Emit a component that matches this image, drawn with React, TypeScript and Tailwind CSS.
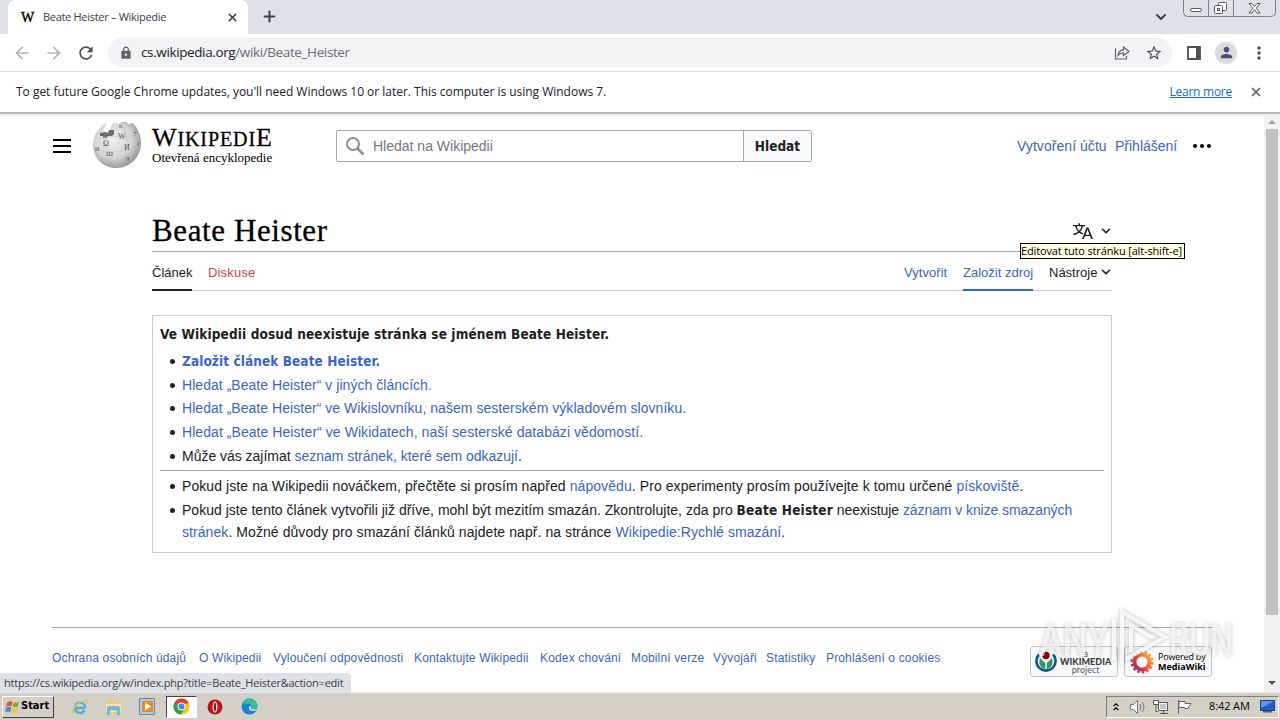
import type { ReactNode } from 'react';
import { ChevronDown, X, Plus } from 'lucide-react';
import { MdArrowBack, MdArrowForward, MdRefresh, MdLock, MdStarBorder, MdPerson, MdMoreVert } from 'react-icons/md';

const UI_FONT = "font-['Open_Sans','Noto_Sans',sans-serif]";
const PAGE_FONT = "font-['Liberation_Sans',Arial,sans-serif]";
const BOLD_FONT = "font-['DejaVu_Sans_Condensed','DejaVu_Sans',sans-serif] [font-stretch:condensed] font-bold text-[13.5px]";

const FOOTER_LINKS = [
  { label: 'Ochrana osobních údajů', width: 'w-[135px]' },
  { label: 'O Wikipedii', width: 'w-[62px]' },
  { label: 'Vyloučení odpovědnosti', width: 'w-[129px]' },
  { label: 'Kontaktujte Wikipedii', width: 'w-[114px]' },
  { label: 'Kodex chování', width: 'w-[79px]' },
  { label: 'Mobilní verze', width: 'w-[70px]' },
  { label: 'Vývojáři', width: 'w-[41px]' },
  { label: 'Statistiky', width: 'w-[48px]' },
  { label: 'Prohlášení o cookies', width: 'w-[116px]' },
];

function Link({ children, className = '' }: { children: ReactNode; className?: string }) {
  return <a className={`text-[#3a66c4] ${className}`}>{children}</a>;
}

function Item({ children, className = '' }: { children: ReactNode; className?: string }) {
  return (
    <li className={`flex ${className}`}>
      <span className="mt-[9px] mr-[7px] ml-[10px] size-[5px] shrink-0 rounded-full bg-[#202122]" />
      <span className="whitespace-nowrap">{children}</span>
    </li>
  );
}

function TabStrip() {
  return (
    <div className="flex h-[34px] bg-[#dee1e6]">
      <div className="ml-2 flex w-60 items-center rounded-t-lg bg-white pl-3">
        <span className="w-[31px] pl-px font-['Liberation_Serif',serif] text-[14px] tracking-tight text-black [-webkit-text-stroke:0.4px_black]">W</span>
        <span className="-ml-2 flex-1 text-[11px] tracking-[-0.3px] whitespace-nowrap text-[#3c4043]">Beate Heister – Wikipedie</span>
        <X className="mr-[9px] size-[13px] text-[#3c4043]" strokeWidth={3} />
      </div>
      <Plus className="mt-2 ml-[13px] size-[17px] text-[#3c4043]" strokeWidth={2.8} />
      <div className="flex-1" />
      <ChevronDown className="mt-[9px] mr-[14px] size-4 text-[#3c4043]" strokeWidth={2.8} />
      <svg className="mr-[3px] h-[17px] w-[94px]" viewBox="0 0 94 17" fill="none" stroke="#7c8087">
        <path d="M.5 0v12.500q0 4 4 4h84q4 0 4-4V0M25.500 0v16M50.500 0v16" />
        <rect x="7.500" y="8.500" width="11" height="3" rx="1.500" fill="#fff" stroke="#555a62" />
        <g stroke="#555a62" fill="#fff">
          <rect x="35.500" y="2.500" width="8" height="8" rx="1" />
          <rect x="31.500" y="5.500" width="8" height="8" rx="1" />
          <rect x="34.500" y="8.500" width="2" height="2" />
          <path d="M66 3.500h3l2.500 3 2.500-3h3l-3.700 4.500 3.700 5h-3l-2.500-3.300L69 13h-3l3.800-5z" />
        </g>
      </svg>
    </div>
  );
}

function Toolbar() {
  return (
    <div className="flex h-[37px] items-center bg-white text-[#5f6368]">
      <MdArrowBack className="ml-3 size-5 text-[#b4b6b9]" />
      <MdArrowForward className="ml-3 size-5 text-[#b4b6b9]" />
      <MdRefresh className="ml-3 size-5 text-[#4d5156]" />
      <div className="ml-3 flex h-[29px] w-[1064px] items-center rounded-full bg-[#f1f3f4] pr-[9px] pl-[11px]">
        <MdLock className="size-[14px]" />
        <span className="ml-2 flex-1 text-[13.500px] tracking-[-0.38px] text-[#6a6e73]">
          <span className="text-[#202124]">cs.wikipedia.org</span>/wiki/Beate_Heister
        </span>
        <svg className="mr-[15px] size-[17px]" viewBox="0 0 17 17" fill="none" stroke="currentColor" strokeWidth="1.200">
          <path d="M2.500 4.500v10.500h11v-3M5 11.500c.3-4 2.500-5.500 5.500-5.700V3l5.500 4.500-5.500 4V8.800c-2.500 0-4 .7-5.500 2.700z" />
        </svg>
        <MdStarBorder className="size-[18px] text-[#4d5156]" />
      </div>
      <svg className="ml-[15px] size-[14px]" viewBox="0 0 14 14">
        <path d="M1 1h12v12H1z" fill="none" stroke="#4d5156" strokeWidth="1.800" />
        <path d="M9 1h4v12H9z" fill="#4d5156" />
      </svg>
      <span className="ml-[14px] flex size-[22px] items-center justify-center rounded-full bg-[#dadce0]">
        <MdPerson className="size-[17px] text-[#465175]" />
      </span>
      <MdMoreVert className="ml-[12px] size-5 text-[#4d5156]" />
    </div>
  );
}

function Globe() {
  return (
    <svg className="h-[49px] w-[50px]" viewBox="0 0 50 49">
      <defs>
        <radialGradient id="globe" cx=".42" cy=".4" r=".65">
          <stop offset="0" stopColor="#efefef" />
          <stop offset=".6" stopColor="#d4d4d4" />
          <stop offset="1" stopColor="#8b8b8b" />
        </radialGradient>
      </defs>
      <path d="M7 8q4-5 8-6l-4 8 5 1 5-9q4-1 5 1l4-2q5-1 6 2l5-1q8 9 8 20C49 36 38 47 24.500 47S1 37 1 24Q1 14 7 8z" fill="url(#globe)" />
      <path d="m8 12 6-1 2 1 1-3h5v4l-2 2h-4l-1 2h-4v-2H8z" fill="#6d6d6d" />
      <path d="M14 16q-2 9 2 16t8 14M29 1q7 12 6 25t-9 21M3 18q20-5 44-1M1 28q22 6 47-2M6 38q18 5 36-1" fill="none" stroke="#bcbcbc" strokeWidth=".5" />
      <g fill="#555" fontFamily="Liberation Serif" fontSize="8">
        <text x="11" y="25">Ω</text>
        <text x="26" y="18">W</text>
        <text x="32" y="29">И</text>
        <text x="14" y="35" fontSize="7">Ш</text>
        <text x="41" y="15" fontSize="7">7</text>
        <text x="3" y="30" fontSize="6">И</text>
        <text x="34" y="40" fontSize="7">9</text>
        <text x="45" y="25" fontSize="7">i</text>
        <text x="27" y="7" fontSize="6">n</text>
      </g>
    </svg>
  );
}

function SiteHeader() {
  return (
    <header className="flex h-[66px] items-center pl-[53px]">
      <div className="flex w-[18px] flex-col gap-[4px]">
        <span className="h-[2px] bg-black" />
        <span className="h-[2px] bg-black" />
        <span className="h-[2px] bg-black" />
      </div>
      <div className="-mt-px ml-[21px]"><Globe /></div>
      <div className="ml-[10px] w-[184px] font-['Liberation_Serif',serif] whitespace-nowrap text-black">
        <div className="text-[20px] leading-[22px] tracking-[0.9px] [-webkit-text-stroke:0.3px_black]">
          <span className="text-[26px]">W</span>IKIPEDI<span className="text-[26px]">E</span>
        </div>
        <div className="text-[13px] leading-[15px]">Otevřená encyklopedie</div>
      </div>
      <div className="flex h-8 w-[476px] rounded-[2px] border border-[#a2a9b1]">
        <div className="flex flex-1 items-center">
          <svg className="ml-2 size-5" viewBox="0 0 20 20" fill="none" stroke="#8b8f94" strokeWidth="2">
            <circle cx="8" cy="8" r="6" />
            <path d="m12.500 12.500 6 6" strokeWidth="2.500" />
          </svg>
          <span className="ml-2 text-[14px] text-[#72777d]">Hledat na Wikipedii</span>
        </div>
        <div className={`flex w-[68px] items-center justify-center border-l border-[#a2a9b1] bg-[#f8f9fa] text-[#202122] ${BOLD_FONT}`}>Hledat</div>
      </div>
      <div className="ml-[205px] flex text-[14px] whitespace-nowrap">
        <Link className="w-[98px] tracking-[0.05px]">Vytvoření účtu</Link>
        <Link className="w-[78px]">Přihlášení</Link>
      </div>
      <div className="flex gap-[3px]">
        <span className="size-1 rounded-full bg-black" />
        <span className="size-1 rounded-full bg-black" />
        <span className="size-1 rounded-full bg-black" />
      </div>
    </header>
  );
}

function Tooltip() {
  return (
    <div className="absolute top-[243px] left-[1020px] flex h-4 w-[165px] items-center border border-black bg-[#ffffe1] text-[11px] tracking-[-0.15px] whitespace-nowrap text-black">
      Editovat tuto stránku [alt-shift-e]
    </div>
  );
}

function Article() {
  return (
    <main className="ml-[152px] w-[960px] text-[#202122]">
      <div className="flex h-[42px] items-center border-b border-[#a2a9b1]">
        <h1 className="flex-1 font-['Liberation_Serif',serif] text-[31px] leading-10 tracking-[0.6px] text-black [-webkit-text-stroke:0.3px_black]">Beate Heister</h1>
        <svg className="size-5" viewBox="0 0 20 20" fill="#202122">
          <path d="M20 18h-1.440a.6.6 0 0 1-.4-.12.800.800 0 0 1-.23-.31L17 15h-5l-1 2.540a.8.8 0 0 1-.22.300.6.6 0 0 1-.4.140H9l4.550-11.470h1.890zm-3.530-4.310L14.890 9.500a12 12 0 0 1-.39-1.240q-.09.370-.19.690l-.19.560-1.580 4.190zm-6.300-1.580a13.400 13.400 0 0 1-2.910-1.410 11.500 11.500 0 0 0 2.810-5.370H12V4H7.310a4 4 0 0 0-.2-.560C6.870 2.790 6.600 2 6.600 2l-1.470.5s.4.890.600 1.500H0v1.330h2.150A11.200 11.200 0 0 0 5 10.700a17.200 17.200 0 0 1-5 2.100q.56.820.870 1.380a23.300 23.300 0 0 0 5.220-2.510 15.600 15.600 0 0 0 3.560 1.770zM3.630 5.330h4.910a8.100 8.100 0 0 1-2.450 4.450 9.100 9.100 0 0 1-2.460-4.450" />
        </svg>
        <ChevronDown className="-mr-px ml-[6px] size-[14px]" strokeWidth={2.8} />
      </div>
      <div className="flex h-[39px] border-b border-[#c8ccd1] text-[13px] leading-[41px] whitespace-nowrap">
        <span className="mr-4 h-[39px] w-10 border-b-2 border-[#202122]">Článek</span>
        <span className="flex-1 tracking-[0.15px] text-[#cf4545]">Diskuse</span>
        <Link className="mr-[15px] w-11 tracking-[0.05px]">Vytvořit</Link>
        <Link className="mr-4 h-[39px] w-[70px] border-b-2 border-[#36c]">Založit zdroj</Link>
        <span className="w-[50px]">Nástroje</span>
        <ChevronDown className="mt-[13px] -mr-px size-[14px]" strokeWidth={2.8} />
      </div>
      <div className="mt-6 h-[238px] border border-[#c8ccd1] px-[7px] pt-[7px] text-[14px] leading-[22px]">
        <p className={`tracking-[0.12px] ${BOLD_FONT}`}>Ve Wikipedii dosud neexistuje stránka se jménem Beate Heister.</p>
        <ul className="mt-[5px]">
          <Item className="h-[23.700px]"><Link className={`tracking-[0.08px] ${BOLD_FONT}`}>Založit článek Beate Heister.</Link></Item>
          <Item className="h-[23.700px] tracking-[0.04px]"><Link>Hledat „Beate Heister“ v jiných článcích.</Link></Item>
          <Item className="h-[23.700px] tracking-[0.04px]"><Link>Hledat „Beate Heister“ ve Wikislovníku, našem sesterském výkladovém slovníku.</Link></Item>
          <Item className="h-[23.700px] tracking-[0.06px]"><Link>Hledat „Beate Heister“ ve Wikidatech, naší sesterské databázi vědomostí.</Link></Item>
          <Item className="h-[23.700px] tracking-[-0.02px]">Může vás zajímat <Link>seznam stránek, které sem odkazují</Link>.</Item>
        </ul>
        <hr className="mt-[2px] border-[#a2a9b1]" />
        <ul className="mt-[4px]">
          <Item className="h-6 tracking-[0.08px]">
            Pokud jste na Wikipedii nováčkem, přečtěte si prosím napřed <Link>nápovědu</Link>. Pro experimenty prosím používejte k tomu určené <Link>pískoviště</Link>.
          </Item>
          <Item>
            <span className="tracking-[0.015px]">Pokud jste tento článek vytvořili již dříve, mohl být mezitím smazán. Zkontrolujte, zda pro </span>
            <b className={`tracking-[0.2px] ${BOLD_FONT}`}>Beate Heister</b>
            <span className="tracking-[-0.08px]"> neexistuje <Link>záznam v knize smazaných</Link></span>
            <br />
            <span className="tracking-[0.07px]">
              <Link>stránek</Link>. Možné důvody pro smazání článků najdete např. na stránce <Link>Wikipedie:Rychlé smazání</Link>.
            </span>
          </Item>
        </ul>
      </div>
    </main>
  );
}

function Badges() {
  return (
    <div className="absolute top-[646px] left-[1030px] flex gap-[6px] text-[#202122]">
      <div className="flex h-[31px] w-[88px] items-center rounded-[3px] border border-[#c3c6ca] bg-[#f8f9fa] pl-[4px]">
        <svg className="size-[22px]" viewBox="0 0 22 22">
          <path d="M4 3.500a9.600 9.600 0 1 0 14 0" fill="none" stroke="#0b5a90" strokeWidth="2.600" />
          <path d="M5 7c-2 6 1 10.500 5.300 11V12zM17 7c2 6-1 10.500-5.300 11V12z" fill="#339966" />
          <circle cx="11" cy="4.500" r="3.700" fill="#900" />
        </svg>
        <div className="ml-[3px] text-center font-['Lato',sans-serif] text-[9px] leading-[8px] text-[#54595d]">
          <div>a</div>
          <div className="text-[9px] font-black tracking-[0.05px] text-[#3a3d40]">WIKIMEDIA</div>
          <div>project</div>
        </div>
      </div>
      <div className="flex h-[31px] w-[88px] items-center rounded-[3px] border border-[#c3c6ca] bg-[#f8f9fa] pl-[5px]">
        <svg className="size-6" viewBox="0 0 24 24">
          <defs>
            <linearGradient id="flower" x1="0" y1="1" x2="1" y2="0">
              <stop offset="0" stopColor="#8b1f6b" />
              <stop offset=".45" stopColor="#f0533a" />
              <stop offset="1" stopColor="#fdb22b" />
            </linearGradient>
          </defs>
          <circle cx="12" cy="12" r="7.500" fill="none" stroke="url(#flower)" strokeWidth="4" />
          <circle cx="12" cy="12" r="10.300" fill="none" stroke="url(#flower)" strokeWidth="2.500" strokeDasharray="2.500 2.120" />
        </svg>
        <div className="ml-1 text-[9px] leading-[10px] tracking-[-0.2px] whitespace-nowrap text-black">
          <div>Powered by</div>
          <div className="font-bold tracking-normal">MediaWiki</div>
        </div>
      </div>
    </div>
  );
}

function Watermark() {
  return (
    <svg className="absolute top-[605px] left-[1034px] h-[64px] w-[204px] overflow-visible drop-shadow-[0_0_2px_rgba(0,0,0,0.35)]" viewBox="0 0 204 64">
      <g fill="#fff" fillOpacity=".65" fontFamily="Roboto" fontSize="46" fontWeight="500">
        <text x="5" y="51" textLength="70" lengthAdjust="spacingAndGlyphs">ANY</text>
        <text x="135" y="51" textLength="64" lengthAdjust="spacingAndGlyphs">RUN</text>
      </g>
      <path d="M80 55V14M88 60V7l43 25-39 22M97 47V20l22 13" fill="none" stroke="#fff" strokeOpacity=".8" strokeWidth="4" />
    </svg>
  );
}

function Scrollbar() {
  return (
    <div className="flex w-4 flex-col items-center bg-[#f1f1f1]">
      <span className="mt-[6px] border-x-4 border-b-4 border-x-transparent border-b-[#a3a3a3]" />
      <span className="mt-[5px] h-[486px] w-3 bg-[#c1c1c1]" />
      <span className="flex-1" />
      <span className="mb-[7px] border-x-4 border-t-4 border-x-transparent border-t-[#505050]" />
    </div>
  );
}

function Taskbar() {
  return (
    <div className="flex h-7 items-center border-t border-[#e9e7e2] bg-[#d4d0c8] text-black">
      <div className="ml-[2px] flex h-[22px] w-[52px] items-center border border-t-white border-r-[#404040] border-b-[#404040] border-l-white pl-[2px] font-['DejaVu_Sans_Condensed','DejaVu_Sans',sans-serif] text-[11px] font-bold [font-stretch:condensed]">
        <svg className="mr-[1px] h-[14px] w-[15px] shrink-0" viewBox="0 0 15 14">
          <path d="M2.500 2Q5 .5 7.500 1.800L6.500 6.300Q4 5.500 1 6.800z" fill="#e8502a" />
          <path d="M8.500 2.300q3 1 5.500-.3l-1.200 4.600q-2.300 1-5.300 0z" fill="#6fb33c" />
          <path d="M1 7.800q2.500-1.300 5.300-.3L5.200 12Q2.500 11 0 12.300z" fill="#3b8ede" />
          <path d="M7.300 7.800q2.700 1 5.400 0L11.500 12.300q-2.700 1.200-5.300.1z" fill="#fbc02d" />
        </svg>
        Start
      </div>
      <svg className="ml-[17px] size-[18px]" viewBox="0 0 18 18" fill="none">
        <path d="M14 10H4.300M4 9.500a5 5 0 0 1 10 0v.5M4 9.500a5 5 0 0 0 9.500 2.500" stroke="#55aede" strokeWidth="2.400" />
        <path d="M2 16C-1 12 8 2.500 15.500 2q2 1 .500 4" stroke="#dfc46a" strokeWidth="1.500" />
      </svg>
      <svg className="ml-[16px] size-[18px]" viewBox="0 0 18 18">
        <path d="M2 2h6l1 2h7v12H2z" fill="#e9cf73" />
        <path d="M1 6h15v8H1z" fill="#f7e9ac" />
        <path d="M2 10q0-2 2-2h9q2 0 2 2v7h-3v-4.500H5V17H2z" fill="#72bcd9" />
      </svg>
      <svg className="ml-[16px] size-[17px]" viewBox="0 0 17 17">
        <path d="M.5.500h15v16H.5z" fill="#a7cdea" stroke="#5b90be" />
        <path d="M3 3h11v11H3z" fill="#f48a1d" />
        <circle cx="8" cy="8.500" r="4.800" fill="#f48a1d" />
        <path d="m6 4.500 6 4-6 4z" fill="#fff" />
      </svg>
      <div className="ml-[10px] flex h-[22px] w-[31px] items-center justify-center border border-t-[#404040] border-r-white border-b-white border-l-[#404040] bg-white">
        <svg className="size-[17px]" viewBox="0 0 18 18">
          <circle cx="9" cy="9" r="8.500" fill="#fbc116" />
          <path d="M9 9 1.600 4.800A8.500 8.500 0 0 1 16.400 4.800z" fill="#e33b2e" />
          <path d="M9 9 1.600 4.800A8.500 8.500 0 0 0 8.300 17.500L12.500 11z" fill="#2ba24c" />
          <circle cx="9" cy="9" r="4.200" fill="#fff" />
          <circle cx="9" cy="9" r="3.200" fill="#4285f4" />
        </svg>
      </div>
      <svg className="ml-[10px] size-4" viewBox="0 0 16 16">
        <circle cx="8" cy="8" r="7.500" fill="#b8141c" />
        <ellipse cx="8" cy="8" rx="2.500" ry="5.800" fill="#f7dada" />
        <ellipse cx="8" cy="8" rx="1" ry="4.500" fill="#8e0c12" />
      </svg>
      <svg className="ml-[18px] size-[17px]" viewBox="0 0 17 17">
        <circle cx="8.500" cy="8.500" r="8" fill="#1683d4" />
        <path d="M1 6C3 0 14-1.500 16.500 7c.5 3-3 5-6 3.500 1-2-.5-4-3-4.500Q3 5 1 6z" fill="#35c18f" />
        <path d="M8 8.500c-1 4 3 5.500 7 4l1.500-2.500c-2 2-5 1.500-6.500 0 .5-1-.5-3-2-1.500z" fill="#d4d0c8" />
      </svg>
      <div className="flex-1" />
      <div className="mr-px flex h-[22px] w-[173px] items-center border border-t-[#808080] border-r-white border-b-white border-l-[#808080] text-[11px]">
        <svg className="ml-[5px] size-[8px]" viewBox="0 0 8 10" fill="none" stroke="#000" strokeWidth="1.500">
          <path d="m1 4 3-3 3 3M1 9l3-3 3 3" />
        </svg>
        <svg className="ml-[9px] h-4 w-[18px]" viewBox="0 0 18 16" fill="#fff" stroke="#777">
          <path d="M1.500 5.500h3l4-4v13l-4-4h-3z" />
          <path d="M11 5q2 3 0 6M13 3q4 5 0 10" fill="none" />
        </svg>
        <svg className="ml-[6px] size-4" viewBox="0 0 16 16" fill="#fff" stroke="#555">
          <path d="M5.500 3.500h9v8h-9zM7 14.500h8M10.500 12v2M.5 1.500h5v4h-5zM3 5.500v7h2" />
          <path d="M7 5h6v5H7z" fill="#c4c4c4" stroke="none" />
        </svg>
        <svg className="ml-[8px] size-4" viewBox="0 0 16 16" fill="#fff" stroke="#666">
          <path d="M1.500 1v14M2 2.500h6v2h6l-2 3-1 2H7.500v-1H2z" />
        </svg>
        <span className="ml-[16px] w-[49px] tracking-[-0.1px] whitespace-nowrap">8:42 AM</span>
        <svg className="ml-[2px] h-[13px] w-[15px]" viewBox="0 0 15 13">
          <path d="M.5.5h14v10H.5z" fill="#245fc4" stroke="#163d87" />
          <path d="M1 1h13L1 8z" fill="#5a9be8" />
          <path d="M3 11h9v1.500H3z" fill="#53606e" />
        </svg>
      </div>
    </div>
  );
}

export default function App() {
  return (
    <div className={`relative h-[720px] w-[1280px] overflow-hidden bg-white ${UI_FONT}`}>
      <TabStrip />
      <Toolbar />
      <div className="flex h-[41px] items-center border-t border-[#dadce0] pr-[17px] pl-4 text-[12px] text-[#202124]">
        <span className="flex-1 tracking-[-0.02px]">To get future Google Chrome updates, you'll need Windows 10 or later. This computer is using Windows 7.</span>
        <span className="tracking-[-0.25px] text-[#1a66d2] underline">Learn more</span>
        <X className="ml-[17px] size-[14px] text-[#5f6368]" strokeWidth={3} />
      </div>
      <div className="flex h-[580px] border-t-2 border-[#b7b7b7]">
        <div className={`flex-1 border-t-2 border-[#efefef] ${PAGE_FONT}`}>
          <div className="-mt-[3px]"><SiteHeader /></div>
          <div className="mt-[31px]"><Article /></div>
          <footer className="mt-[74px] ml-[52px] flex h-16 w-[1160px] gap-[12px] border-t border-[#a2a9b1] pt-[19px] text-[12px] leading-[22px] tracking-[0.15px] whitespace-nowrap">
            {FOOTER_LINKS.map(link => (
              <Link key={link.label} className={`shrink-0 ${link.width}`}>{link.label}</Link>
            ))}
          </footer>
        </div>
        <Scrollbar />
      </div>
      <Taskbar />
      <Tooltip />
      <Badges />
      <Watermark />
      <div className="absolute top-[673px] left-0 flex h-[19px] w-[351px] items-center rounded-tr bg-[#dee1e6] pt-px pl-1 text-[11px] tracking-[-0.22px] whitespace-nowrap text-[#3c4043]">
        https://cs.wikipedia.org/w/index.php?title=Beate_Heister&amp;action=edit
      </div>
    </div>
  );
}
